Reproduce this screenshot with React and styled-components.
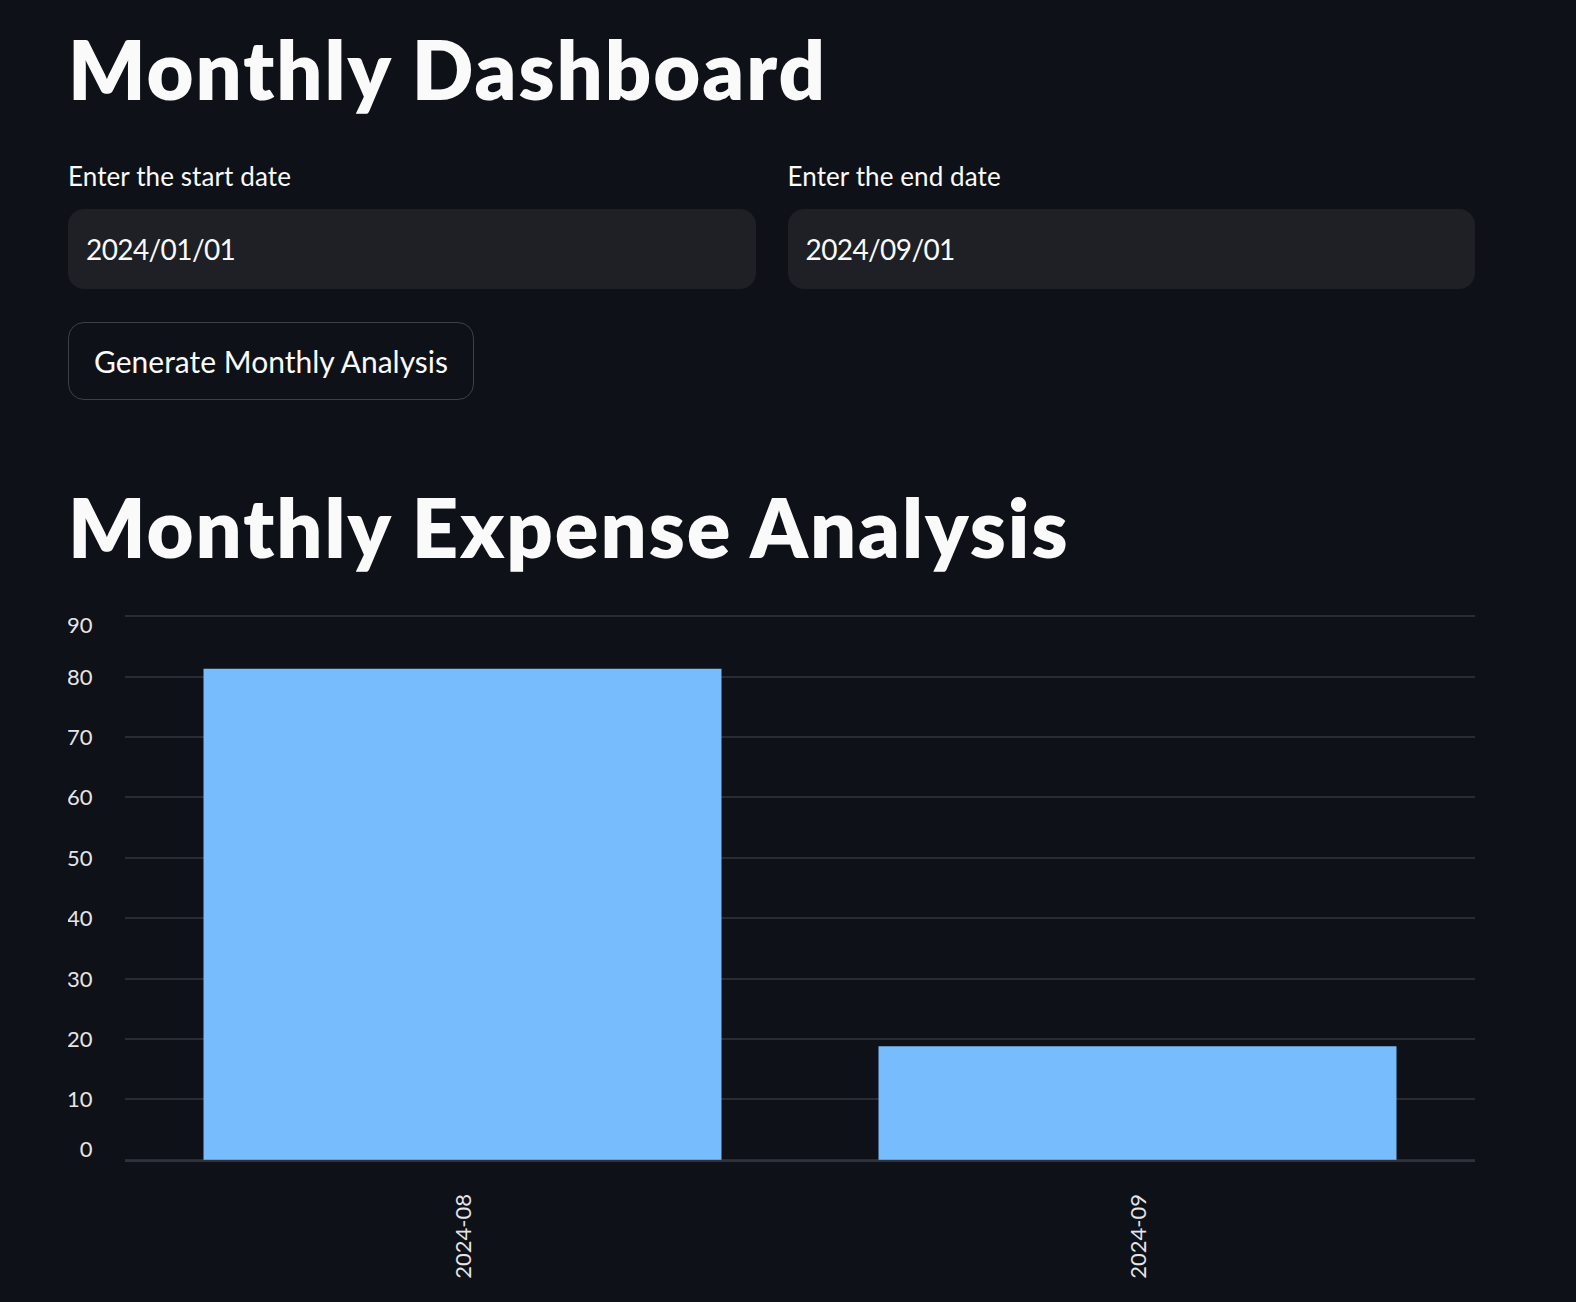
import React from 'react';
import styled, {createGlobalStyle} from 'styled-components';

const expenses = [
    {month:"2024-08", amount:81.3},
    {month:"2024-09", amount:18.8}
]
const ticks = [0,10,20,30,40,50,60,70,80,90]

// chart geometry, in svg units
const CHART_W = 1407
const CHART_H = 696
const PLOT_LEFT = 57
const PLOT_TOP = 11.2
const STEP = 60.4
const ZERO_Y = PLOT_TOP + 9 * STEP
const BAND_W = (CHART_W - PLOT_LEFT) / expenses.length
const BAR_PAD = 78.5

const yOf = (v) => ZERO_Y - v / 10 * STEP

function ExpenseChart () {
    const tickLabelY = (t) => {
        const y = yOf(t)
        if (t === 90) return y + 17
        if (t === 0) return y - 3
        return y + 8
    }

    return (
        <CHART width={CHART_W} height={CHART_H} viewBox={`0 0 ${CHART_W} ${CHART_H}`}>
            {ticks.map(t =>
                <g key={t}>
                    <line x1={PLOT_LEFT} x2={CHART_W} y1={Math.round(yOf(t))} y2={Math.round(yOf(t))} stroke="#2a2b33" strokeWidth="2"/>
                    <AXIS_TEXT x="24.5" y={tickLabelY(t)} textAnchor="end">{t}</AXIS_TEXT>
                </g>
            )}
            {expenses.map((e, i) => {
                const x = PLOT_LEFT + i * BAND_W + BAR_PAD
                const top = yOf(e.amount)
                const center = PLOT_LEFT + i * BAND_W + BAND_W / 2
                return (
                    <g key={e.month}>
                        <rect x={x} y={top} width={BAND_W - BAR_PAD * 2} height={ZERO_Y - top} fill="#77bcfd"/>
                        <AXIS_TEXT transform={`translate(${center + 8}, 589) rotate(-90)`} textAnchor="end">{e.month}</AXIS_TEXT>
                    </g>
                )
            })}
            <line x1={PLOT_LEFT} x2={CHART_W} y1={Math.round(ZERO_Y) + 1} y2={Math.round(ZERO_Y) + 1} stroke="#30313a" strokeWidth="2"/>
        </CHART>
    )
}

function App () {
    return (
        <PAGE>
            <GlobalStyle/>
            <TITLE>Monthly Dashboard</TITLE>
            <DATE_ROW>
                <FIELD>
                    <LABEL>Enter the start date</LABEL>
                    <DATE_INPUT readOnly value="2024/01/01"/>
                </FIELD>
                <FIELD>
                    <LABEL>Enter the end date</LABEL>
                    <DATE_INPUT readOnly value="2024/09/01"/>
                </FIELD>
            </DATE_ROW>
            <BUTTON>Generate Monthly Analysis</BUTTON>
            <TITLE $gapTop={78}>Monthly Expense Analysis</TITLE>
            <ExpenseChart/>
        </PAGE>
    )
}

export default App;

const GlobalStyle = createGlobalStyle `
body {
    margin:0;
    background:#0e1117;
    color:#fafafa;
    font-family:Lato, "Noto Sans", sans-serif;
}
`

const PAGE = styled.div `
width:1407px;
height:1302px;
padding-left:68px;
overflow:hidden;
display:flex;
flex-direction:column;
align-items:flex-start;
`

const TITLE = styled.h1 `
margin:${p => p.$gapTop || 20}px 0 0 0;
font-size:81px;
font-weight:800;
line-height:97px;
letter-spacing:2px;
`

const DATE_ROW = styled.div `
width:100%;
display:grid;
grid-template-columns:1fr 1fr;
column-gap:32px;
margin-top:42px;
`

const FIELD = styled.div `
display:flex;
flex-direction:column;
gap:15px;
`

const LABEL = styled.label `
font-size:26px;
line-height:35px;
letter-spacing:0.1px;
`

const DATE_INPUT = styled.input `
box-sizing:border-box;
width:100%;
height:80px;
padding:0 18px;
border:none;
outline:none;
border-radius:16px;
background:#1f2026;
color:#fafafa;
font-family:Lato, "Noto Sans", sans-serif;
font-size:28px;
letter-spacing:-0.6px;
`

const BUTTON = styled.button `
margin-top:33px;
height:78px;
padding:0 25px;
border:1px solid rgba(250,250,250,0.2);
border-radius:16px;
background:transparent;
color:#fafafa;
font-family:Lato, "Noto Sans", sans-serif;
font-size:30px;
`

const CHART = styled.svg `
display:block;
margin-top:30px;
`

const AXIS_TEXT = styled.text `
fill:#e5e5e8;
font-family:Lato, "Noto Sans", sans-serif;
font-size:22px;
`
